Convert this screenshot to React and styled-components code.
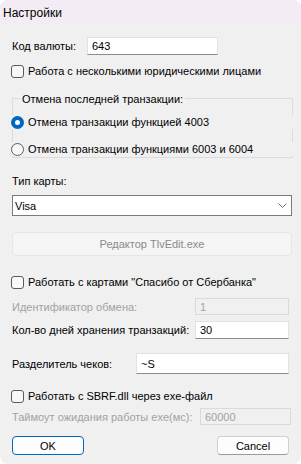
import React from 'react';
import styled, { createGlobalStyle } from 'styled-components';

const GlobalStyle = createGlobalStyle`
  html, body {
    margin: 0;
    padding: 0;
    background: #ffffff;
  }
  body {
    font-family: 'Liberation Sans', Arial, sans-serif;
    font-size: 11px;
    color: #000;
  }
`;

const Window = styled.div`
  width: 301px;
  height: 464px;
  box-sizing: border-box;
  background: #f0f0f0;
  border-radius: 8px;
  overflow: hidden;
  display: flex;
  flex-direction: column;
`;

const TitleBar = styled.div`
  height: 25px;
  flex: none;
  background: #f4ecf4;
  display: flex;
  align-items: center;
  padding-left: 3px;
  font-size: 12px;
`;

const Body = styled.div`
  display: flex;
  flex-direction: column;
  padding: 0 9px 0 12px;
`;

const Row = styled.div`
  display: flex;
  align-items: center;
  justify-content: space-between;
  flex: none;
  height: ${(p) => p.$h || 18}px;
  margin-top: ${(p) => p.$mt || 0}px;
  margin-right: ${(p) => p.$mr || 0}px;
`;

const Label = styled.span`
  color: ${(p) => (p.$disabled ? '#a2a2a2' : '#000')};
  white-space: nowrap;
`;

const TextBox = styled.div`
  box-sizing: border-box;
  width: ${(p) => p.$w}px;
  height: 100%;
  background: ${(p) => (p.$disabled ? '#f0f0f0' : '#fff')};
  border: 1px solid ${(p) => (p.$disabled ? '#dadada' : '#e2e2e2')};
  border-bottom-color: ${(p) => (p.$disabled ? '#dadada' : '#8c8c8c')};
  color: ${(p) => (p.$disabled ? '#a2a2a2' : '#000')};
  display: flex;
  align-items: center;
  padding-left: 4px;
`;

const CheckRow = styled.label`
  display: flex;
  align-items: center;
  flex: none;
  gap: 4px;
  height: 14px;
  margin-top: ${(p) => p.$mt || 0}px;
  margin-left: -1px;
`;

const CheckBox = styled.span`
  box-sizing: border-box;
  width: 13px;
  height: 13px;
  border: 1px solid #5a5a5a;
  border-radius: 3px;
  background: #f8f8f8;
`;

const Group = styled.div`
  margin-top: ${(p) => p.$mt || 0}px;
  margin-right: -1px;
  height: 60px;
  flex: none;
  box-sizing: border-box;
  border: 1px solid #dcdcdc;
  display: flex;
  flex-direction: column;
`;

const Legend = styled.span`
  align-self: flex-start;
  margin: -7px 0 0 7px;
  padding: 0 2px;
  background: #f0f0f0;
  line-height: 14px;
  height: 14px;
`;

const RadioRow = styled.label`
  display: flex;
  align-items: center;
  gap: 4px;
  height: 14px;
  margin: ${(p) => p.$mt}px -3px 0 -2px;
  background: #f0f0f0;
`;

const Radio = styled.span`
  box-sizing: border-box;
  width: 13px;
  height: 13px;
  border-radius: 50%;
  border: ${(p) => (p.$on ? '4px solid #0067c0' : '1px solid #5a5a5a')};
  background: ${(p) => (p.$on ? '#fff' : '#f8f8f8')};
`;

const Select = styled.div`
  box-sizing: border-box;
  height: 21px;
  flex: none;
  margin-top: ${(p) => p.$mt || 0}px;
  background: #fff;
  border: 1px solid #7a7a7a;
  display: flex;
  align-items: center;
  justify-content: space-between;
  padding: 0 4px 0 2px;
`;

const Button = styled.div`
  box-sizing: border-box;
  flex: none;
  height: ${(p) => p.$h}px;
  width: ${(p) => (p.$w ? `${p.$w}px` : 'auto')};
  margin-top: ${(p) => p.$mt || 0}px;
  display: flex;
  align-items: center;
  justify-content: center;
  border-radius: 4px;
  background: ${(p) => (p.$disabled ? '#f5f5f5' : '#fdfdfd')};
  border: 1px solid ${(p) => (p.$primary ? '#0067c0' : p.$disabled ? '#e6e6e6' : '#d0d0d0')};
  border-bottom-color: ${(p) => (p.$primary ? '#0067c0' : p.$disabled ? '#e6e6e6' : '#9a9a9a')};
  color: ${(p) => (p.$disabled ? '#8a8a8a' : '#000')};
`;

const Footer = styled.div`
  display: flex;
  justify-content: space-between;
  margin-top: 11px;
  margin-right: 3px;
`;

const Chevron = () => (
  <svg width="9" height="5" viewBox="0 0 9 5">
    <path d="M0.5 0.5 L4.5 4.5 L8.5 0.5" fill="none" stroke="#707070" strokeWidth="1" />
  </svg>
);

export default function App() {
  return (
    <Window>
      <GlobalStyle />
      <TitleBar>Настройки</TitleBar>
      <Body>
        <Row $mt={12} $mr={74}>
          <Label>Код валюты:</Label>
          <TextBox $w={131}>643</TextBox>
        </Row>
        <CheckRow $mt={9}>
          <CheckBox />
          Работа с несколькими юридическими лицами
        </CheckRow>
        <Group $mt={20}>
          <Legend>Отмена последней транзакции:</Legend>
          <RadioRow $mt={9}>
            <Radio $on />
            Отмена транзакции функцией 4003
          </RadioRow>
          <RadioRow $mt={13}>
            <Radio />
            Отмена транзакции функциями 6003 и 6004
          </RadioRow>
        </Group>
        <Row $mt={16} $h={14}>
          <Label>Тип карты:</Label>
        </Row>
        <Select $mt={7}>
          <span>Visa</span>
          <Chevron />
        </Select>
        <Button $h={24} $mt={16} $disabled>
          Редактор TlvEdit.exe
        </Button>
        <CheckRow $mt={19}>
          <CheckBox />
          Работать с картами "Спасибо от Сбербанка"
        </CheckRow>
        <Row $mt={9} $h={17} $mr={3}>
          <Label $disabled>Идентификатор обмена:</Label>
          <TextBox $w={94} $disabled>1</TextBox>
        </Row>
        <Row $mt={6} $h={18} $mr={3}>
          <Label>Кол-во дней хранения транзакций:</Label>
          <TextBox $w={94}>30</TextBox>
        </Row>
        <Row $mt={14} $h={21} $mr={3}>
          <Label>Разделитель чеков:</Label>
          <TextBox $w={153}>~S</TextBox>
        </Row>
        <CheckRow $mt={15}>
          <CheckBox />
          Работать с SBRF.dll через exe-файл
        </CheckRow>
        <Row $mt={5} $h={17} $mr={1}>
          <Label $disabled>Таймоут ожидания работы exe(мс):</Label>
          <TextBox $w={91} $disabled>60000</TextBox>
        </Row>
        <Footer>
          <Button $h={19} $w={72} $primary>OK</Button>
          <Button $h={19} $w={72}>Cancel</Button>
        </Footer>
      </Body>
    </Window>
  );
}
